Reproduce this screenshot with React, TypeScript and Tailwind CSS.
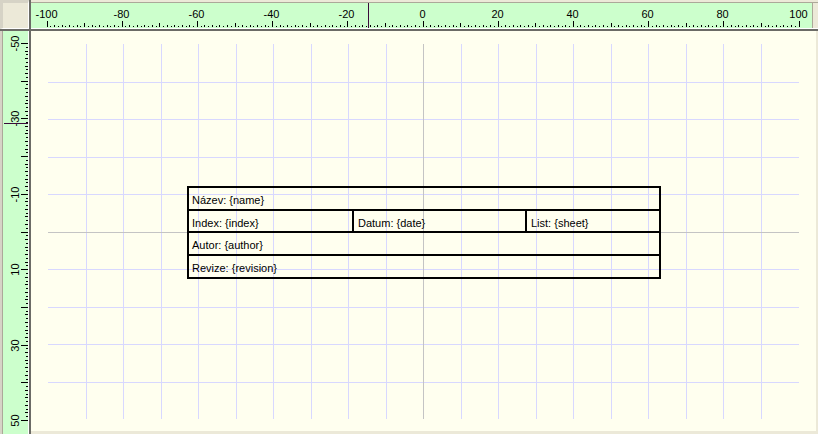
import React from "react";

const TOP_X0 = 31; // global x of top ruler svg
const LEFT_Y0 = 31; // global y of left ruler svg

function TopRuler() {
  const ticks: React.ReactElement[] = [];
  const labels: React.ReactElement[] = [];
  for (let u = -100; u <= 100; u++) {
    const p = Math.floor(423 + 3.76 * u);
    const x = p - TOP_X0 + 0.5;
    const len = u % 20 === 0 ? 6 : u % 10 === 0 ? 4 : u % 2 === 0 ? 2 : 1;
    ticks.push(<line key={u} x1={x} x2={x} y1={24 - len} y2={24} stroke="#000" strokeWidth={1} />);
    if (u % 20 === 0) {
      labels.push(
        <text key={"l" + u} x={x - 1} y={15} textAnchor="middle" fontSize={11} fill="#000" fontFamily="Liberation Sans, Arial, sans-serif">
          {String(u)}
        </text>
      );
    }
  }
  const cx = 368 - TOP_X0 + 0.5;
  return (
    <svg width={781} height={25} className="block">
      {ticks}
      {labels}
      <line x1={cx} x2={cx} y1={0} y2={25} stroke="#3a0a3a" strokeWidth={1} />
    </svg>
  );
}

function LeftRuler() {
  const ticks: React.ReactElement[] = [];
  const labels: React.ReactElement[] = [];
  for (let u = -50; u <= 50; u++) {
    const p = Math.floor(232 + 3.77 * u);
    const y = p - LEFT_Y0 + 0.5;
    const len = u % 10 === 0 ? 7 : u % 2 === 0 ? 3 : 2;
    ticks.push(<line key={u} x1={25 - len} x2={25} y1={y} y2={y} stroke="#000" strokeWidth={1} />);
    if (u % 20 !== 0 && u % 10 === 0) {
      labels.push(
        <text key={"l" + u} transform={`translate(16 ${y}) rotate(-90)`} textAnchor="middle" fontSize={11} fill="#000" fontFamily="Liberation Sans, Arial, sans-serif">
          {String(u)}
        </text>
      );
    }
  }
  const cy = 123 - LEFT_Y0 + 0.5;
  return (
    <svg width={25} height={402} className="block">
      {ticks}
      {labels}
      <line x1={1} x2={25} y1={cy} y2={cy} stroke="#3a0a3a" strokeWidth={1} />
    </svg>
  );
}

function Grid() {
  const v: number[] = [];
  for (let i = 0; i <= 18; i++) v.push(Math.floor(86 + 37.5 * i));
  const h: number[] = [];
  for (let j = 0; j <= 8; j++) h.push(Math.floor(82 + 37.5 * j));
  const gx = (p: number) => p - 31 + 0.5;
  const gy = (p: number) => p - 31 + 0.5;
  return (
    <svg width={785} height={400} className="absolute left-0 top-0">
      {v.map((p, i) =>
        i === 9 ? null : (
          <line key={"v" + i} x1={gx(p)} x2={gx(p)} y1={13} y2={388} stroke="#d8d8ff" strokeWidth={1} />
        )
      )}
      {h.map((p, j) =>
        j === 4 ? null : (
          <line key={"h" + j} x1={17} x2={768} y1={gy(p)} y2={gy(p)} stroke="#d8d8ff" strokeWidth={1} />
        )
      )}
      <line x1={gx(v[9])} x2={gx(v[9])} y1={13} y2={388} stroke="#c4c4c4" strokeWidth={1} />
      <line x1={17} x2={768} y1={gy(h[4])} y2={gy(h[4])} stroke="#c4c4c4" strokeWidth={1} />
    </svg>
  );
}

function TitleBlock() {
  return (
    <div className="absolute left-[156px] top-[155px] w-[474px] h-[93px] border-2 border-black flex flex-col text-[11px] leading-[13px] text-black whitespace-nowrap">
      <div className="h-[23px] shrink-0 border-b-2 border-black pl-[3px] pt-[6px]">{"Název: {name}"}</div>
      <div className="h-[22px] shrink-0 border-b-2 border-black flex">
        <div className="w-[165px] shrink-0 border-r-2 border-black pl-[3px] pt-[6px]">{"Index: {index}"}</div>
        <div className="w-[173px] shrink-0 border-r-2 border-black pl-[4px] pt-[6px]">{"Datum: {date}"}</div>
        <div className="flex-1 pl-[4px] pt-[6px]">{"List: {sheet}"}</div>
      </div>
      <div className="h-[23px] shrink-0 border-b-2 border-black pl-[3px] pt-[6px]">{"Autor: {author}"}</div>
      <div className="flex-1 pl-[3px] pt-[6px]">{"Revize: {revision}"}</div>
    </div>
  );
}

export default function App() {
  return (
    <div className="w-[818px] h-[434px] bg-[#ece9d8] flex flex-col overflow-hidden font-['Liberation_Sans',Arial,sans-serif]">
      {/* Row 1 */}
      <div className="flex h-[31px] shrink-0">
        <div className="w-[31px] h-[31px] shrink-0 border-r-2 border-b-2 border-[#6b6b66]">
          <div className="w-full h-full border-t-[3px] border-l-[3px] border-[#d6d3c6] border-r border-b border-r-white border-b-white bg-[#ece9d8]" />
        </div>
        <div className="w-[787px] h-[31px] shrink-0 border-b-2 border-[#6b6b66] flex flex-col">
          <div className="h-[3px] shrink-0 border-b border-[#aca899] bg-[#ece9d8]" />
          <div className="h-[25px] shrink-0 flex">
            <div className="w-[781px] h-[25px] bg-[#ccffcc]">
              <TopRuler />
            </div>
            <div className="w-[1px] h-[25px] bg-[#aca899]" />
          </div>
          <div className="h-[1px] shrink-0 bg-white" />
        </div>
      </div>
      {/* Row 2 */}
      <div className="flex h-[403px] shrink-0">
        <div className="w-[31px] h-[403px] shrink-0 border-r-2 border-[#6b6b66] flex">
          <div className="w-[3px] h-full shrink-0 border-r border-[#aca899] bg-[#d6d3c6]" />
          <div className="w-[25px] h-full shrink-0 bg-[#ccffcc]">
            <LeftRuler />
          </div>
          <div className="w-[1px] h-full shrink-0 bg-white" />
        </div>
        <div className="w-[785px] h-[400px] shrink-0 relative bg-[#ffffef]">
          <Grid />
          <TitleBlock />
        </div>
      </div>
    </div>
  );
}
